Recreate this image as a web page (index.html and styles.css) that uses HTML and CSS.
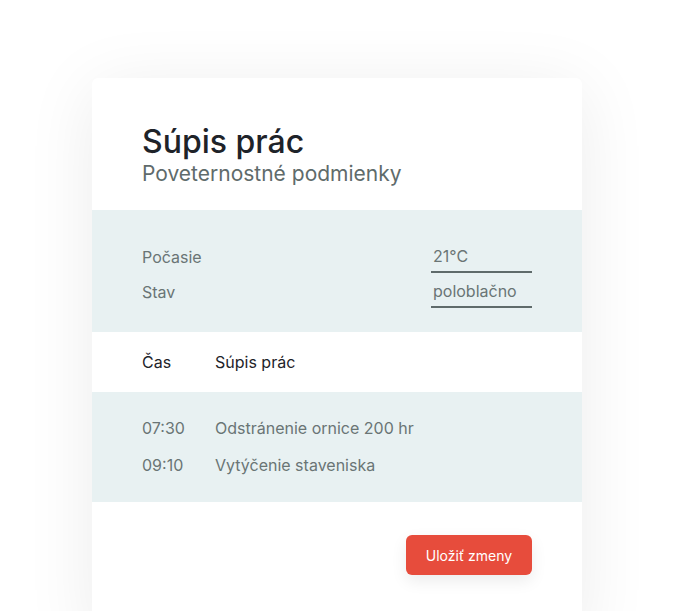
FILE: index.html
```html
<!DOCTYPE html>
<html lang="sk">
<head>
    <meta charset="UTF-8">
    <meta name="viewport" content="width=device-width, initial-scale=1.0">
    <title>Súpis prác</title>
    <link rel="stylesheet" href="styles.css">
</head>
<body>
    <div class="card">
        <div class="header">
            <h1>Súpis prác</h1>
            <h2>Poveternostné podmienky</h2>
        </div>

        <div class="band weather">
            <div class="field">
                <label for="temp">Počasie</label>
                <input type="text" id="temp" value="21°C">
            </div>
            <div class="field">
                <label for="state">Stav</label>
                <input type="text" id="state" value="poloblačno">
            </div>
        </div>

        <div class="row head">
            <span class="time">Čas</span>
            <span>Súpis prác</span>
        </div>

        <div class="band works">
            <div class="row">
                <span class="time">07:30</span>
                <span>Odstránenie ornice 200 hr</span>
            </div>
            <div class="row">
                <span class="time">09:10</span>
                <span>Vytýčenie staveniska</span>
            </div>
        </div>

        <div class="footer">
            <button type="button">Uložiť zmeny</button>
        </div>
    </div>
</body>
</html>
```

FILE: styles.css
```css
body {
    font-family: Inter, "Open Sans", sans-serif;
    margin: 0;
    padding: 0;
    background-color: #fff;
    color: #6a7575;
    overflow: hidden;
}
.card {
    width: 490px;
    height: 560px;
    margin: 78px 0 0 92px;
    background-color: #fff;
    border-radius: 6px;
    box-shadow: 0 10px 70px rgba(0, 0, 0, 0.08);
}
.header {
    padding: 45px 50px 24px;
}
h1 {
    margin: 0;
    font-size: 32px;
    line-height: 38px;
    font-weight: 500;
    color: #1e2329;
}
h2 {
    margin: 1px 0 0;
    font-size: 21px;
    line-height: 24px;
    font-weight: 400;
    color: #5f6b6b;
}
.band {
    background-color: #e8f1f2;
}
.weather {
    padding: 29px 50px 23px;
}
.field {
    display: flex;
    justify-content: space-between;
    align-items: center;
    height: 35px;
}
.field label {
    font-size: 16px;
}
.field input {
    width: 101px;
    height: 33px;
    box-sizing: border-box;
    padding: 0 2px;
    border: none;
    border-bottom: 2px solid #5f6b6b;
    background: transparent;
    font-family: inherit;
    font-size: 16px;
    color: #6a7575;
    outline: none;
}
.row {
    display: flex;
    align-items: center;
    height: 37px;
    padding: 0 50px;
    font-size: 16px;
}
.row .time {
    width: 73px;
}
.head {
    height: 60px;
    color: #1e2329;
}
.works {
    padding: 17px 0 19px;
}
.footer {
    display: flex;
    justify-content: flex-end;
    padding: 33px 50px;
}
button {
    height: 40px;
    width: 126px;
    border: none;
    border-radius: 6px;
    background-color: #e74c3c;
    color: #fff;
    font-family: inherit;
    font-size: 14px;
    cursor: pointer;
    box-shadow: 0 6px 16px rgba(0, 0, 0, 0.08);
}
```
